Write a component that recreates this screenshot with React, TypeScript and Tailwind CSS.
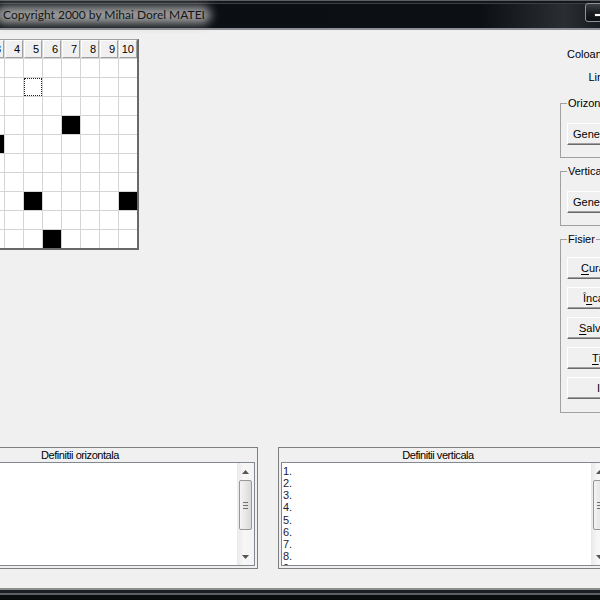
import React from "react"

const COLS = 10
const ROWS = 10
const blackCells = new Set(["4-7", "5-3", "8-5", "8-10", "10-6"])
const focusCell = "2-5"

function HeadCell({ label }: { label?: string }) {
  return (
    <div className="box-border flex items-center justify-end pr-[2px] bg-[#f0f0f0] border border-t-white border-l-white border-r-[#a0a0a0] border-b-[#a0a0a0] text-[11px] leading-none text-black">
      {label}
    </div>
  )
}

function Grid() {
  const cells: React.ReactNode[] = []
  // header row
  cells.push(<HeadCell key="h-0" />)
  for (let c = 1; c <= COLS; c++) cells.push(<HeadCell key={`h-${c}`} label={String(c)} />)
  for (let r = 1; r <= ROWS; r++) {
    cells.push(<HeadCell key={`r-${r}`} label={String(r)} />)
    for (let c = 1; c <= COLS; c++) {
      const k = `${r}-${c}`
      if (blackCells.has(k)) cells.push(<div key={k} className="bg-black" />)
      else if (k === focusCell)
        cells.push(<div key={k} className="box-border bg-white border border-dotted border-[#222]" />)
      else cells.push(<div key={k} className="bg-white" />)
    }
  }
  return (
    <div className="mt-[9px] ml-[-72px] shrink-0 border-t border-l border-t-[#a0a0a0] border-l-[#a0a0a0] border-r-2 border-b-2 border-r-[#696969] border-b-[#696969]">
      <div className="grid grid-cols-[repeat(11,18px)] auto-rows-[18px] gap-px bg-[#d4d4d4]">{cells}</div>
    </div>
  )
}

function Btn({ children, pad }: { children: React.ReactNode; pad: string }) {
  return (
    <div
      className={`box-border h-[22px] w-[80px] flex items-center bg-[#f0f0f0] border border-t-white border-l-white border-r-[#696969] border-b-[#696969] shadow-[inset_-1px_-1px_0_#a0a0a0] ${pad}`}
    >
      {children}
    </div>
  )
}

function Group({ title, children, className }: { title: string; children: React.ReactNode; className: string }) {
  return (
    <fieldset className={`ml-[1px] w-[109px] border border-[#a0a0a0] pl-[6px] ${className}`}>
      <legend className="px-[1px] leading-[13px]">{title}</legend>
      {children}
    </fieldset>
  )
}

function SidePanel() {
  return (
    <div className="ml-auto w-[110px] shrink-0 flex flex-col text-[11px] leading-[13px]">
      <div className="mt-[13px] w-[52px] flex flex-col">
        <div className="h-[23px] flex items-center justify-end">Coloane:</div>
        <div className="h-[23px] flex items-center justify-end">Linii:</div>
      </div>
      <Group title="Orizontala" className="mt-[8px] pb-[12px]">
        <div className="mt-[13px]">
          <Btn pad="pl-[5px]">Generare</Btn>
        </div>
      </Group>
      <Group title="Verticala" className="mt-[7px] pb-[12px]">
        <div className="mt-[13px]">
          <Btn pad="pl-[5px]">Generare</Btn>
        </div>
      </Group>
      <Group title="Fisier" className="mt-[7px] pb-[13px]">
        <div className="mt-[11px] flex flex-col gap-[8px]">
          <Btn pad="pl-[13px]">
            <span className="underline underline-offset-2">C</span>urata
          </Btn>
          <Btn pad="pl-[15px]">
            Î<span className="underline underline-offset-2">n</span>carca
          </Btn>
          <Btn pad="pl-[11px]">
            <span className="underline underline-offset-2">S</span>alvare
          </Btn>
          <Btn pad="pl-[24px]">
            <span className="underline underline-offset-2">T</span>ipar
          </Btn>
          <Btn pad="pl-[29px]">Iesire</Btn>
        </div>
      </Group>
    </div>
  )
}

function Arrow({ up }: { up?: boolean }) {
  return (
    <div className="h-[17px] flex items-center justify-center">
      <svg width="7" height="4" viewBox="0 0 7 4">
        <path d={up ? "M0 4 L3.5 0 L7 4Z" : "M0 0 L3.5 4 L7 0Z"} fill="#555" />
      </svg>
    </div>
  )
}

function VScroll() {
  return (
    <div className="w-[17px] shrink-0 flex flex-col bg-[linear-gradient(90deg,#e9e9e9,#f7f7f7_40%,#f3f3f3)]">
      <Arrow up />
      <div className="flex-1">
        <div className="mx-[2px] h-[50px] rounded-[2px] border border-[#979797] bg-[linear-gradient(90deg,#f4f4f4,#e6e6e6_55%,#d8d8d8)] flex flex-col items-center justify-center gap-[2px]">
          <div className="w-[5px] h-px bg-[#6f6f6f]" />
          <div className="w-[5px] h-px bg-[#6f6f6f]" />
          <div className="w-[5px] h-px bg-[#6f6f6f]" />
        </div>
      </div>
      <Arrow />
    </div>
  )
}

function DefBox({
  title,
  className,
  headW,
  lines,
}: {
  title: string
  className: string
  headW: string
  lines: string[]
}) {
  return (
    <div className={`h-[122px] shrink-0 border border-[#7f7f7f] flex flex-col ${className}`}>
      <div className={`h-[14px] flex items-center justify-center text-[11px] leading-none tracking-[-0.45px] ${headW}`}>
        {title}
      </div>
      <div className="flex-1 mx-[2px] mb-[2px] border border-[#828790] bg-white flex min-h-0">
        <div className="flex-1 overflow-hidden pl-[1px] pt-[2px] text-[11px] leading-[12.15px] text-[#1c1a33]">
          {lines.map((l) => (
            <div key={l}>{l}</div>
          ))}
        </div>
        <VScroll />
      </div>
    </div>
  )
}

function TitleBar() {
  return (
    <div className="h-[30px] shrink-0 flex items-start border-t border-t-[#5c5e61] border-b-2 border-b-[#8d9094] shadow-[inset_0_2px_0_#14171b,inset_0_3px_0_#3a3d41] bg-[linear-gradient(90deg,#0b0f14_0%,#0c1015_80%,#2a2e33_94%,#181c20_100%)]">
      <div className="relative ml-[3px] mt-[4px] h-[19px] flex items-center">
        <div className="absolute -left-[8px] -right-[6px] top-[1px] bottom-[0px] rounded-full bg-[#9a9a9a] blur-[5px]" />
        <span className="relative font-['Lato',sans-serif] text-[12px] text-[#151515]">
          Copyright 2000 by Mihai Dorel MATEI
        </span>
      </div>
      <div className="ml-auto mr-[-12px] mt-[2px] w-[27px] h-[19px] rounded-[3px] border border-[#8f9296] bg-[linear-gradient(#3d4146,#1b1e22_50%,#0e1114)] flex items-center justify-start pl-[8px]">
        <div className="mt-[4px] w-[9px] h-[2px] bg-white border border-[#2a2a2a] box-content" />
      </div>
    </div>
  )
}

export default function App() {
  const vert = ["1.", "2.", "3.", "4.", "5.", "6.", "7.", "8.", "9."]
  return (
    <div className="w-[600px] h-[600px] overflow-hidden flex flex-col bg-[#0b0e12] font-['Liberation_Sans',Arial,sans-serif] text-black">
      <TitleBar />
      <div className="h-[558px] shrink-0 bg-[#f0f0f0] flex flex-col">
        <div className="w-[669px] flex items-start">
          <Grid />
          <SidePanel />
        </div>
        <div className="mt-[34px] flex items-start">
          <DefBox title="Definitii orizontala" className="ml-[-98px] w-[356px]" headW="w-full" lines={[]} />
          <DefBox title="Definitii verticala" className="ml-[20px] w-[334px]" headW="w-[318px]" lines={vert} />
        </div>
      </div>
      <div className="h-[12px] shrink-0 bg-[linear-gradient(#8d8d8d_0_2px,#1b1e22_2px_5px,#5c5f63_5px_7px,#0b0c0e_7px)]" />
    </div>
  )
}
